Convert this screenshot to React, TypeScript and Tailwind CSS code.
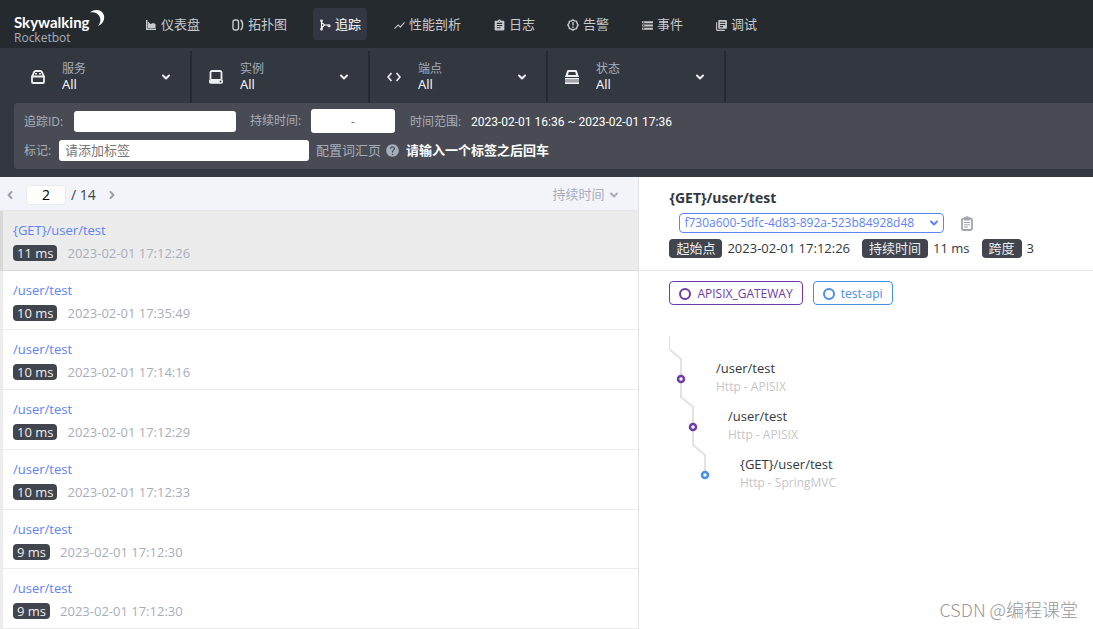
import { type ReactNode } from 'react';
import clsx from 'clsx';
import { ChevronDown, ChevronLeft, ChevronRight } from 'lucide-react';
import {
  MdAssignment,
  MdHelp,
  MdLibraryBooks,
  MdShowChart,
  MdStorage,
} from 'react-icons/md';

interface NavItem {
  label: string;
  icon: ReactNode;
  active?: boolean;
}

const navItems: NavItem[] = [
  {
    label: '仪表盘',
    icon: (
      <svg viewBox="0 0 12 12" className="size-3" fill="currentColor">
        <path d="M1 1h1.5v8.500H11V11H1z" />
        <path d="M3 9V2.500l2.500 2.500L8 4l2.500 1v4z" />
      </svg>
    ),
  },
  {
    label: '拓扑图',
    icon: (
      <svg viewBox="0 0 12 12" className="size-3" fill="none" stroke="currentColor" strokeWidth="1.4">
        <rect x="1" y="1" width="5.500" height="10" rx="2" />
        <path d="M8.500 1c2.800 1.400 2.800 8.600 0 10" />
      </svg>
    ),
  },
  {
    label: '追踪',
    active: true,
    icon: (
      <svg viewBox="0 0 12 12" className="size-3" fill="none" stroke="currentColor" strokeWidth="1.1">
        <path d="M2.500 2v8M2.500 3.500l3 2.500h4M2.500 9l3-3" />
        <circle cx="2.500" cy="1.800" r=".8" />
        <circle cx="2.500" cy="10.200" r=".8" />
        <circle cx="10" cy="6.800" r="1" />
      </svg>
    ),
  },
  { label: '性能剖析', icon: <MdShowChart size={13} className="-mr-px" /> },
  { label: '日志', icon: <MdAssignment size={13} className="-mr-px" /> },
  {
    label: '告警',
    icon: (
      <svg viewBox="0 0 12 12" className="size-3" fill="none" stroke="currentColor" strokeWidth="1.4">
        <path d="M6 .8l1.500 1 2 .6.600 2L11.200 6l-1.100 1.600-.6 2-2 .6L6 11.200l-1.500-1-2-.6-.6-2L.8 6l1.100-1.600.6-2 2-.6z" />
        <path d="M6 3v3.500M6 7.500v1.500" />
      </svg>
    ),
  },
  { label: '事件', icon: <MdStorage size={13} className="-mr-px" /> },
  { label: '调试', icon: <MdLibraryBooks size={13} className="-mr-px" /> },
];

const selectors = [
  {
    id: 'service',
    label: '服务',
    icon: (
      <svg viewBox="0 0 14 14" className="size-3.5" fill="none" stroke="currentColor" strokeWidth="1.8">
        <path d="M1 6.500h12V12a1 1 0 0 1-1 1H2a1 1 0 0 1-1-1zM1.200 6.500L3 2.200A2 2 0 0 1 5 1h4a2 2 0 0 1 2 1.200l1.800 4.300" />
        <path d="M4 3.800h2M8 3.800h2" strokeWidth="1.4" />
      </svg>
    ),
  },
  {
    id: 'instance',
    label: '实例',
    icon: (
      <svg viewBox="0 0 14 14" className="size-3.5" fill="none" stroke="currentColor" strokeWidth="1.8">
        <path d="M1.500 9V2.500A1.500 1.500 0 0 1 3 1h8a1.500 1.500 0 0 1 1.500 1.500V9" />
        <rect x="0" y="9" width="14" height="4.800" rx="1.800" fill="currentColor" stroke="none" />
        <circle cx="11.500" cy="11.400" r=".9" fill="#333840" stroke="none" />
      </svg>
    ),
  },
  {
    id: 'endpoint',
    label: '端点',
    icon: (
      <svg viewBox="0 0 14 14" className="size-3.5" fill="none" stroke="currentColor" strokeWidth="1.6">
        <path d="M4.500 3L1 7l3.500 4M9.500 3L13 7l-3.500 4" />
      </svg>
    ),
  },
  {
    id: 'status',
    label: '状态',
    icon: (
      <svg viewBox="0 0 14 14" className="size-3.5" fill="currentColor">
        <path fillRule="evenodd" d="M3.500 0h7a1.500 1.500 0 0 1 1.500 1l2 6H0l2-6a1.500 1.500 0 0 1 1.500-1zm.3 2L3 5h8l-.8-3z" />
        <path d="M0 8h14v1.500H0zM0 12.200h14V14H0z" />
        <path d="M0 9.500h14v2.700H0z" opacity=".6" />
      </svg>
    ),
  },
];

const traces = [
  { name: '{GET}/user/test', duration: '11 ms', time: '2023-02-01 17:12:26' },
  { name: '/user/test', duration: '10 ms', time: '2023-02-01 17:35:49' },
  { name: '/user/test', duration: '10 ms', time: '2023-02-01 17:14:16' },
  { name: '/user/test', duration: '10 ms', time: '2023-02-01 17:12:29' },
  { name: '/user/test', duration: '10 ms', time: '2023-02-01 17:12:33' },
  { name: '/user/test', duration: '9 ms', time: '2023-02-01 17:12:30' },
  { name: '/user/test', duration: '9 ms', time: '2023-02-01 17:12:30' },
];

const spans = [
  { name: '/user/test', layer: 'Http - APISIX', color: '#6f3bab' },
  { name: '/user/test', layer: 'Http - APISIX', color: '#6f3bab' },
  { name: '{GET}/user/test', layer: 'Http - SpringMVC', color: '#4a90e2' },
];

function Logo() {
  return (
    <div className="relative w-[125px] pl-3.5 pt-3">
      <p className="font-[Lato,sans-serif] text-[15px] leading-5 font-bold text-white">Skywalking</p>
      <p className="text-xs leading-3 text-[#a7aebb]">Rocketbot</p>
      <svg viewBox="0 0 15 18" className="absolute left-[90px] top-[9px] h-[18px] w-[15px]" fill="#fff">
        <path d="M0 3.500C5-.5 12 .5 13.800 6c1.300 4.500-.8 9-5.800 11 2.500-3 3-6 1.800-9C8.300 4.500 4.500 2.500 0 3.500z" />
      </svg>
    </div>
  );
}

function NavBar() {
  return (
    <header className="flex h-12 bg-[#252a2f]">
      <Logo />
      <nav className="ml-3.5 flex items-center gap-5">
        {navItems.map((item) => (
          <a
            key={item.label}
            href="#"
            className={clsx(
              'flex h-8 items-center gap-1 rounded px-1.5 pt-0.5 text-[13px] whitespace-nowrap',
              item.active ? 'bg-[#333743] text-white' : 'text-[#c8c9cb]',
            )}
          >
            {item.icon}
            {item.label}
          </a>
        ))}
      </nav>
    </header>
  );
}

function SelectorBar() {
  return (
    <div className="flex pl-3.5 pt-[3px]">
      {selectors.map((s) => (
        <label
          key={s.id}
          htmlFor={s.id}
          className="flex h-[52px] w-[178px] items-center border-r-2 border-[#252a2f] pl-[17px] pr-[18px] text-[#efeff1]"
        >
          {s.icon}
          <span className="ml-[17px] flex min-w-0 flex-1 flex-col pb-0.5">
            <span className="text-xs leading-4 text-[#a7aebb]">{s.label}</span>
            <select id={s.id} className="h-[15px] appearance-none bg-transparent text-[13px] leading-[15px] text-white outline-none">
              <option>All</option>
            </select>
          </span>
          <ChevronDown size={12} strokeWidth={4} />
        </label>
      ))}
    </div>
  );
}

function FilterPanel() {
  return (
    <div className="ml-3.5 flex flex-col gap-1 rounded-l bg-[#484b54] px-2.5 pt-1.5 pb-2 text-xs text-[#a7aebb]">
      <div className="flex h-6 items-center">
        <label htmlFor="trace-id" className="w-[50px] pt-0.5">追踪ID:</label>
        <input id="trace-id" className="h-[21px] w-[162px] rounded-[3px] bg-white px-1.5 text-black outline-none" />
        <label htmlFor="duration" className="ml-3.5 w-[61px]">持续时间:</label>
        <input
          id="duration"
          placeholder="-"
          className="h-6 w-[84px] rounded-[3px] bg-white text-center text-black outline-none placeholder:text-[#777]"
        />
        <span className="ml-[15px] w-[61px] pt-0.5">时间范围:</span>
        <span className="pt-0.5 font-[Roboto,sans-serif] text-white">2023-02-01 16:36 ~ 2023-02-01 17:36</span>
      </div>
      <div className="flex h-6 items-center pt-0.5">
        <label htmlFor="tags" className="w-[35px] pt-0.5">标记:</label>
        <input
          id="tags"
          placeholder="请添加标签"
          className="h-[21px] w-[250px] rounded-[3px] bg-white px-1.5 text-[13px] text-black outline-none placeholder:text-[#777]"
        />
        <a href="#" className="ml-[7px] flex items-center gap-1 pt-0.5 text-[13px]">
          配置词汇页
          <MdHelp size={15} />
        </a>
        <b className="ml-1.5 pt-0.5 text-[13px] text-white">请输入一个标签之后回车</b>
      </div>
    </div>
  );
}

function TraceList() {
  return (
    <section className="flex w-[58.5%] flex-col border-r border-[#e4e4e6]">
      <div className="flex h-[34px] items-center border-b border-[#e8e8ec] bg-[#f3f4f9] pl-1 pr-[18px] pt-0.5 text-[13px] text-[#3d444f]">
        <button aria-label="上一页" className="text-[#9a9ea8]">
          <ChevronLeft size={12} strokeWidth={4} />
        </button>
        <input
          aria-label="页码"
          defaultValue="2"
          className="ml-2.5 h-5 w-10 rounded border border-[#ebebef] bg-white text-center text-sm text-black outline-none"
        />
        <span className="ml-[5px] text-sm">/ 14</span>
        <button aria-label="下一页" className="ml-2.5 text-[#9a9ea8]">
          <ChevronRight size={12} strokeWidth={4} />
        </button>
        <label className="ml-auto flex items-center gap-[3px] text-[#a7aebb]">
          <select aria-label="排序" className="appearance-none bg-transparent outline-none">
            <option>持续时间</option>
          </select>
          <ChevronDown size={12} strokeWidth={4} />
        </label>
      </div>
      <ul className="flex flex-1 flex-col">
        {traces.map((t, i) => (
          <li
            key={i}
            className={clsx(
              'flex-1 border-b border-l-[3px] pl-2.5 pt-2.5',
              i === 0 ? 'border-b-[#d8d8d8] border-l-[#d8d8d8] bg-[#ececec]' : 'border-b-[#ebebeb] border-l-[#ececec]',
            )}
          >
            <a href="#" className="block text-[13px] leading-[18px] text-[#6083f7]">{t.name}</a>
            <div className="mt-1.5 flex items-center gap-2.5 pb-2 leading-4">
              <span className="rounded bg-[#40454e] px-1 text-[13px] text-[#eee]">{t.duration}</span>
              <time className="text-[13px] text-[#a7aebb]">{t.time}</time>
            </div>
          </li>
        ))}
      </ul>
    </section>
  );
}

function Tag({ children }: { children: ReactNode }) {
  return <span className="mr-[5px] rounded bg-[#40454e] px-[7px] leading-[19px] text-[#eee]">{children}</span>;
}

function SpanTree() {
  return (
    <svg width="300" height="170" className="mt-[31px] block" role="img" aria-label="跨度">
      <path
        d="M0 0v13l12 10v38l12 10v38l12 10v20"
        fill="none"
        stroke="#e2e2e2"
        strokeWidth="2"
      />
      {spans.map((s, i) => (
        <g key={i} transform={`translate(${12 + i * 12} ${43 + i * 48})`}>
          <circle r="3" fill="#fff" stroke={s.color} strokeWidth="2.5" />
          <text x="35" y="-6" className="fill-[#333840] text-[13px]">{s.name}</text>
          <text x="35" y="12" className="fill-[#c6c6c6] text-xs">{s.layer}</text>
        </g>
      ))}
    </svg>
  );
}

function TraceDetail() {
  return (
    <section className="min-w-0 flex-1 text-[13px] text-[#333840]">
      <div className="border-b border-[#e4e4e6] pb-3 pl-[30px] pt-2.5">
        <h1 className="text-sm leading-[22px] font-bold">{'{GET}/user/test'}</h1>
        <div className="ml-2.5 mt-1 flex items-center gap-[17px]">
          <label className="flex h-5 w-[265px] items-center rounded border border-[#6083f7] pl-1 pr-[3px] text-[#6083f7]">
            <select aria-label="Trace ID" className="min-w-0 flex-1 appearance-none bg-transparent text-xs outline-none">
              <option>f730a600-5dfc-4d83-892a-523b84928d48</option>
            </select>
            <ChevronDown size={12} strokeWidth={4} />
          </label>
          <button aria-label="复制" className="text-[#a0a5b0]">
            <svg viewBox="0 0 12 15" className="h-[15px] w-3" fill="none" stroke="currentColor">
              <rect x="1" y="2.500" width="10" height="11.500" rx="1.500" strokeWidth="1.800" />
              <path d="M3 1.500h2a1 1 0 0 1 2 0h2v3H3z" fill="currentColor" stroke="none" />
              <path d="M4.500.5h3v3h-3z" fill="currentColor" stroke="none" />
              <path d="M3 6.500h6M3 8.800h6M3 11h4" />
            </svg>
          </button>
        </div>
        <div className="mt-1.5 flex items-center leading-[19px] whitespace-nowrap">
          <Tag>起始点</Tag>
          <span className="mr-3">2023-02-01 17:12:26</span>
          <Tag>持续时间</Tag>
          <span className="mr-3">11 ms</span>
          <Tag>跨度</Tag>
          <span>3</span>
        </div>
      </div>
      <div className="pl-[30px] pt-2.5">
        <div className="flex gap-2.5">
          <button className="flex h-6 items-center gap-1.5 rounded border border-[#6f3bab] px-[9px] pt-0.5 text-xs text-[#6f3bab]">
            <span className="size-3 rounded-full border-2 border-current" />
            APISIX_GATEWAY
          </button>
          <button className="flex h-6 items-center gap-1.5 rounded border border-[#4a90e2] px-[9px] pt-0.5 text-xs text-[#4a90e2]">
            <span className="size-3 rounded-full border-2 border-current" />
            test-api
          </button>
        </div>
        <SpanTree />
      </div>
    </section>
  );
}

export default function App() {
  return (
    <div className="relative flex min-h-screen flex-col bg-white font-['Open_Sans','Noto_Sans_CJK_SC',sans-serif]">
      <NavBar />
      <div className="bg-[#333840] pb-2">
        <SelectorBar />
        <FilterPanel />
      </div>
      <main className="flex flex-1">
        <TraceList />
        <TraceDetail />
      </main>
      <p className="absolute right-[15px] bottom-2 font-['Noto_Sans_CJK_SC',sans-serif] text-lg leading-6 font-light text-[#999]">
        CSDN @编程课堂
      </p>
    </div>
  );
}
